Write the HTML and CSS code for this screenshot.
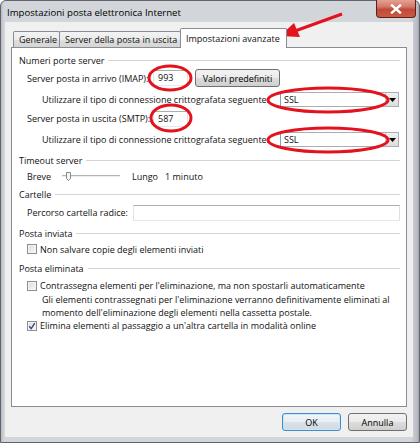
FILE: index.html
```html
<!DOCTYPE html>
<html lang="it">
<head>
<meta charset="utf-8">
<title>Impostazioni posta elettronica Internet</title>
<link rel="stylesheet" href="styles.css">
</head>
<body>
<div class="window">
  <div class="titlebar">
    <span class="title">Impostazioni posta elettronica Internet</span>
    <div class="close">
      <svg width="12" height="10" viewBox="0 0 12 10"><path d="M2 1.5 L10 8.5 M10 1.5 L2 8.5" stroke="#fff" stroke-width="2.4" stroke-linecap="square"/></svg>
    </div>
  </div>
  <div class="client">
    <div class="tabs">
      <div class="tab t1">Generale</div>
      <div class="tab t2">Server della posta in uscita</div>
      <div class="tab active">Impostazioni avanzate</div>
    </div>
    <div class="panel">
      <div class="group"><span>Numeri porte server</span><i class="rule"></i></div>
      <div class="row r-imap">
        <span class="lbl w-port">Server posta in arrivo (IMAP):</span>
        <span class="textbox port">993</span>
        <span class="btn btn-def">Valori predefiniti</span>
      </div>
      <div class="row sub r-sub1">
        <span class="lbl w-sub">Utilizzare il tipo di connessione crittografata seguente:</span>
        <span class="combo"><span class="combo-val">SSL</span><span class="drop"><svg width="7" height="4" viewBox="0 0 7 4"><path d="M0 0 H7 L3.5 4 Z" fill="#000"/></svg></span></span>
      </div>
      <div class="row r-smtp">
        <span class="lbl w-port">Server posta in uscita (SMTP):</span>
        <span class="textbox port">587</span>
      </div>
      <div class="row sub r-sub2">
        <span class="lbl w-sub">Utilizzare il tipo di connessione crittografata seguente:</span>
        <span class="combo"><span class="combo-val">SSL</span><span class="drop"><svg width="7" height="4" viewBox="0 0 7 4"><path d="M0 0 H7 L3.5 4 Z" fill="#000"/></svg></span></span>
      </div>
      <div class="group g-timeout"><span>Timeout server</span><i class="rule"></i></div>
      <div class="row r-slider">
        <span class="lbl w-breve">Breve</span>
        <svg class="slider" width="58" height="14" viewBox="0 0 58 14">
          <rect x="0" y="6" width="58" height="1" fill="#b4b4b4"/>
          <rect x="0" y="7" width="58" height="1" fill="#ececec"/>
          <path d="M4.5 3.5 H8.5 V9.5 L6.5 11.5 L4.5 9.5 Z" fill="#f4f4f4" stroke="#8a8a8a" stroke-width="1"/>
        </svg>
        <span class="lungo">Lungo</span>
        <span class="minuto">1 minuto</span>
      </div>
      <div class="group g-cartelle"><span>Cartelle</span><i class="rule"></i></div>
      <div class="row r-path">
        <span class="lbl w-path">Percorso cartella radice:</span>
        <span class="textbox wide"></span>
      </div>
      <div class="group g-inviata"><span>Posta inviata</span><i class="rule"></i></div>
      <div class="row r-cb1">
        <span class="cb"></span>
        <span>Non salvare copie degli elementi inviati</span>
      </div>
      <div class="group g-eliminata"><span>Posta eliminata</span><i class="rule"></i></div>
      <div class="row r-cb2">
        <span class="cb"></span>
        <span>Contrassegna elementi per l'eliminazione, ma non spostarli automaticamente</span>
      </div>
      <p class="desc">Gli elementi contrassegnati per l'eliminazione verranno definitivamente eliminati al<br>momento dell'eliminazione degli elementi nella cassetta postale.</p>
      <div class="row r-cb3">
        <span class="cb checked"><svg width="8" height="8" viewBox="0 0 8 8"><path d="M1.2 4.2 L3.2 6.6 L6.8 1.2" fill="none" stroke="#2f4a8a" stroke-width="1.4"/></svg></span>
        <span>Elimina elementi al passaggio a un'altra cartella in modalità online</span>
      </div>
    </div>
    <div class="footer">
      <span class="btn btn-foot btn-ok">OK</span>
      <span class="btn btn-foot">Annulla</span>
    </div>
  </div>
  <svg class="annot" width="420" height="443" viewBox="0 0 420 443">
    <g fill="none" stroke="#e3121c" stroke-width="3">
      <ellipse cx="170" cy="78" rx="21" ry="12"/>
      <ellipse cx="171" cy="118" rx="20" ry="13"/>
      <ellipse cx="328" cy="100" rx="60" ry="12"/>
      <ellipse cx="328" cy="140" rx="60" ry="12"/>
      <line x1="342" y1="14" x2="295" y2="31"/>
    </g>
    <polygon points="280,36 294,23 300,37" fill="#e3121c"/>
  </svg>
</div>
</body>
</html>
```
FILE: styles.css
```css
* { box-sizing: border-box; margin: 0; padding: 0; }
html, body { width: 420px; height: 443px; overflow: hidden; }
body {
  font-family: "Open Sans", "Noto Sans", sans-serif;
  font-size: 9px;
  color: #111;
  background: #fff;
}
.window {
  position: relative;
  width: 420px;
  height: 443px;
  display: flex;
  flex-direction: column;
  background: linear-gradient(90deg, #b9bdc3 0px, #d2d6db 3px, #d2d6db 410px, #b8bcc2 416px, #8e9298 420px);
  border: 1px solid #60646a;
  border-radius: 6px 6px 0 0;
  padding: 0 6px 5px 4px;
}
.titlebar {
  height: 21px;
  display: flex;
  align-items: flex-start;
  padding-left: 2px;
}
.title {
  font-size: 9.6px;
  line-height: 12px;
  padding-top: 6px;
  color: #000;
}
.close {
  margin-left: auto;
  margin-right: -3px;
  margin-top: -1px;
  width: 40px;
  height: 18px;
  border: 1px solid #5e1f16;
  border-top: none;
  border-radius: 0 0 4px 4px;
  background: linear-gradient(#e5a294 0%, #d3786a 40%, #c04a37 55%, #c95b45 100%);
  display: flex;
  align-items: center;
  justify-content: center;
}
.client {
  flex: 1;
  background: #f0f0f0;
  padding: 6px 6px 6px 6px;
  display: flex;
  flex-direction: column;
}
.tabs {
  height: 19px;
  display: flex;
  align-items: flex-end;
  padding-left: 2px;
  position: relative;
  z-index: 1;
}
.tab {
  height: 16px;
  border: 1px solid #898c95;
  border-bottom: none;
  border-radius: 2px 2px 0 0;
  background: linear-gradient(#f3f3f3 0%, #ebebeb 50%, #dedede 51%, #d5d5d5 100%);
  padding: 1px 0 0 5px;
  line-height: 13px;
  white-space: nowrap;
}
.t1 { width: 47px; }
.t2 { width: 122px; margin-left: -1px; }
.tab.active {
  width: 107px;
  height: 20px;
  margin-left: -1px;
  margin-bottom: -1px;
  background: #fff;
  line-height: 17px;
  padding-top: 1px;
}
.panel {
  height: 360px;
  background: #fff;
  border: 1px solid #898c95;
  padding: 5px 6px 0 7px;
  display: flex;
  flex-direction: column;
}
.group {
  height: 14px;
  display: flex;
  align-items: center;
  gap: 4px;
  white-space: nowrap;
}
.rule {
  flex: 1;
  height: 1px;
  background: #d5d5d5;
  margin-top: 1px;
}
.row {
  display: flex;
  align-items: center;
  padding-left: 8px;
  white-space: nowrap;
}
.row.sub { padding-left: 23px; }
.lbl { flex: none; }
.w-port { width: 126px; }
.w-sub { width: 238px; }
.w-breve { width: 35px; }
.w-path { width: 106px; }

.r-imap { margin-top: 1px; height: 20px; }
.r-sub1 { margin-top: 4px; height: 15px; }
.r-smtp { margin-top: 3px; height: 17px; }
.r-sub2 { margin-top: 5px; height: 15px; }
.g-timeout { margin-top: 6px; }
.r-slider { margin-top: 2px; height: 14px; }
.g-cartelle { margin-top: 4px; }
.r-path { margin-top: 3px; height: 17px; }
.g-inviata { margin-top: 5px; }
.r-cb1 { margin-top: 2px; height: 14px; }
.g-eliminata { margin-top: 5px; }
.r-cb2 { margin-top: 4px; height: 13px; }
.r-cb3 { height: 13px; }

.textbox {
  display: block;
  height: 16px;
  border: 1px solid #abadb3;
  border-left-color: #e2e3ea;
  border-right-color: #dbdfe6;
  border-bottom-color: #e3e9ef;
  background: #fff;
  line-height: 14px;
  padding-left: 4px;
}
.port { width: 35px; }
.wide { flex: 1; }

.btn {
  display: flex;
  align-items: center;
  justify-content: center;
  height: 18px;
  border: 1px solid #707070;
  border-radius: 3px;
  background: linear-gradient(#f2f2f2 0%, #ebebeb 50%, #dddddd 51%, #cfcfcf 100%);
  color: #000;
}
.btn-def { width: 85px; margin-left: 7px; }

.combo {
  display: flex;
  width: 119px;
  height: 15px;
  border: 1px solid #abadb3;
  border-left-color: #7da2ce;
  background: #fff;
}
.combo-val { flex: 1; line-height: 13px; padding-left: 3px; }
.drop {
  width: 13px;
  display: flex;
  align-items: center;
  justify-content: center;
  background: linear-gradient(#f2f2f2, #dcdcdc);
  border-left: 1px solid #c8c8c8;
}

.slider { flex: none; }
.lungo { margin-left: 12px; }
.minuto { margin-left: 7px; }

.cb {
  flex: none;
  width: 10px;
  height: 10px;
  margin-right: 3px;
  border: 1px solid #8e8f8f;
  background: linear-gradient(135deg, #dcdcdc, #f8f8f8);
  box-shadow: inset 0 0 0 1px #f4f4f4;
  display: flex;
  align-items: center;
  justify-content: center;
}
.desc {
  margin-top: 1px;
  padding-left: 23px;
  line-height: 13px;
  height: 26px;
  white-space: nowrap;
}

.footer {
  display: flex;
  justify-content: flex-end;
  gap: 7px;
  margin-top: 6px;
}
.btn-foot { width: 59px; }
.btn-ok {
  border-color: #3c8ccf;
  box-shadow: inset 0 0 0 1px #c9e8f8;
  background: linear-gradient(#f1f5f8 0%, #e8eef2 50%, #dbe3e8 51%, #d0dae0 100%);
}
.annot {
  position: absolute;
  left: -1px;
  top: -1px;
  pointer-events: none;
}
```
